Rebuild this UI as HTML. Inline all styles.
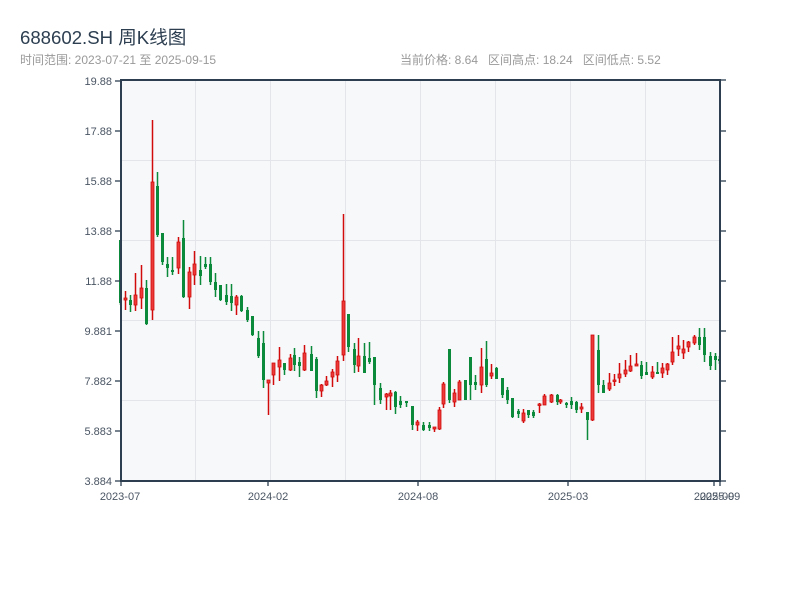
<!DOCTYPE html>
<html><head><meta charset="utf-8"><style>
html,body{margin:0;padding:0;background:#fff;width:800px;height:600px;overflow:hidden}
.t{position:absolute;left:20px;top:23px;font:18.6px "Liberation Sans","Noto Sans CJK SC",sans-serif;color:#2c3e50}
.s{position:absolute;top:51px;font:12px "Liberation Sans","Noto Sans CJK SC",sans-serif;color:#999}
svg{position:absolute;left:0;top:0}
</style></head><body>
<div class="t">688602.SH 周K线图</div>
<div class="s" style="left:20px">时间范围: 2023-07-21 至 2025-09-15</div>
<div class="s" style="left:400px">当前价格: 8.64&nbsp;&nbsp; 区间高点: 18.24&nbsp;&nbsp; 区间低点: 5.52</div>
<svg id="c" width="800" height="600" xmlns="http://www.w3.org/2000/svg" font-family="Liberation Sans, sans-serif" font-size="11">
<rect x="121" y="80" width="599" height="400" fill="#f7f8fa"/>
<g stroke="#e3e5ea" stroke-width="1">
<line x1="195.5" y1="80" x2="195.5" y2="480"/><line x1="270.5" y1="80" x2="270.5" y2="480"/><line x1="345.5" y1="80" x2="345.5" y2="480"/><line x1="420.5" y1="80" x2="420.5" y2="480"/><line x1="495.5" y1="80" x2="495.5" y2="480"/><line x1="570.5" y1="80" x2="570.5" y2="480"/><line x1="645.5" y1="80" x2="645.5" y2="480"/>
<line x1="121" y1="160.5" x2="720" y2="160.5"/><line x1="121" y1="240.5" x2="720" y2="240.5"/><line x1="121" y1="320.5" x2="720" y2="320.5"/><line x1="121" y1="400.5" x2="720" y2="400.5"/>
</g>
<g id="k"></g>
<g stroke="#2c3e50" stroke-width="2" fill="none">
<line x1="121" y1="80" x2="121" y2="481"/><line x1="120" y1="481" x2="721" y2="481"/>
<line x1="120" y1="80" x2="721" y2="80"/><line x1="720" y1="80" x2="720" y2="481"/>
</g>
<g stroke="#2c3e50" stroke-width="1.3">
<line x1="115" y1="81" x2="120" y2="81"/><line x1="115" y1="131" x2="120" y2="131"/><line x1="115" y1="181" x2="120" y2="181"/><line x1="115" y1="231" x2="120" y2="231"/><line x1="115" y1="281" x2="120" y2="281"/><line x1="115" y1="331" x2="120" y2="331"/><line x1="115" y1="381" x2="120" y2="381"/><line x1="115" y1="431" x2="120" y2="431"/><line x1="115" y1="481" x2="120" y2="481"/>
<line x1="721" y1="131" x2="726" y2="131"/><line x1="721" y1="181" x2="726" y2="181"/><line x1="721" y1="231" x2="726" y2="231"/><line x1="721" y1="281" x2="726" y2="281"/><line x1="721" y1="331" x2="726" y2="331"/><line x1="721" y1="381" x2="726" y2="381"/><line x1="721" y1="431" x2="726" y2="431"/><line x1="721" y1="481" x2="726" y2="481"/><line x1="721" y1="80" x2="726" y2="80"/>
<line x1="121" y1="481" x2="121" y2="486"/><line x1="268" y1="481" x2="268" y2="486"/><line x1="418" y1="481" x2="418" y2="486"/><line x1="568" y1="481" x2="568" y2="486"/><line x1="714" y1="481" x2="714" y2="486"/><line x1="720" y1="481" x2="720" y2="486"/>
</g>
<g fill="#4a5563" text-anchor="end">
<text x="112" y="85">19.88</text><text x="112" y="135">17.88</text><text x="112" y="185">15.88</text><text x="112" y="235">13.88</text><text x="112" y="285">11.88</text><text x="112" y="335">9.881</text><text x="112" y="385">7.882</text><text x="112" y="435">5.883</text><text x="112" y="485">3.884</text>
</g>
<g fill="#4a5563" text-anchor="middle">
<text x="120" y="500">2023-07</text><text x="268" y="500">2024-02</text><text x="418" y="500">2024-08</text><text x="568" y="500">2025-03</text><text x="714" y="500">2025-09</text><text x="720" y="500">2025-09</text>
</g>
</svg>
<script>
var d=[
[120,240,305,240,303,'g'],[125,291,310,298,300,'r'],[130,295,312,300,305,'g'],[135,273,311,295,305,'r'],[141,265,309,288,298,'r'],[146,280,325,288,324,'g'],[152,120,320,182,310,'r'],[157,172,237,186,235,'g'],[162,233,265,233,262,'g'],[167,257,277,264,268,'g'],[172,257,275,270,272,'g'],[178,237,274,242,268,'r'],[183,220,298,238,297,'g'],[189,267,309,272,297,'r'],[194,251,285,264,275,'r'],[200,256,285,270,276,'g'],[205,257,269,264,267,'g'],[210,257,285,264,282,'g'],[215,273,297,282,290,'g'],[220,285,301,285,300,'g'],[226,284,305,295,302,'g'],[231,284,311,296,303,'g'],[236,295,315,297,305,'r'],[241,295,312,296,311,'g'],[247,307,322,310,320,'g'],[252,316,336,316,335,'g'],[258,331,358,338,356,'g'],[263,331,388,343,380,'g'],[268,380,415,380,383,'r'],[273,363,385,363,375,'r'],[279,347,381,360,367,'r'],[284,363,375,363,370,'g'],[290,354,371,358,370,'r'],[294,348,371,355,365,'g'],[299,357,377,362,366,'g'],[304,345,371,353,370,'r'],[311,346,371,354,371,'g'],[316,357,398,359,391,'g'],[321,384,397,385,391,'r'],[326,376,386,381,385,'r'],[332,369,387,372,377,'r'],[337,356,382,361,375,'r'],[343,214,361,301,355,'r'],[348,314,352,314,347,'g'],[354,343,373,349,365,'g'],[358,338,372,356,366,'r'],[364,343,373,356,373,'g'],[369,342,364,358,362,'g'],[374,357,405,357,385,'g'],[380,383,404,388,400,'g'],[386,393,410,394,397,'r'],[390,390,410,393,396,'r'],[395,391,414,392,407,'g'],[400,396,408,401,405,'g'],[406,401,407,401,403,'g'],[412,406,430,406,425,'g'],[417,420,431,422,425,'r'],[423,422,431,425,430,'g'],[429,422,431,425,428,'g'],[434,427,432,427,429,'r'],[439,407,430,410,429,'r'],
[443,382,408,384,404,'r'],[449,349,403,349,400,'g'],[454,389,407,393,402,'r'],[459,380,400,382,400,'r'],[465,380,400,380,400,'g'],[470,357,400,357,385,'g'],[475,375,390,382,385,'g'],[481,348,393,367,385,'r'],[486,341,387,359,385,'g'],[491,364,379,373,376,'r'],[496,367,379,368,379,'g'],[502,378,398,378,395,'g'],[507,387,404,390,400,'g'],[512,398,418,398,417,'g'],[518,409,418,411,414,'g'],[523,409,423,413,421,'r'],[528,410,418,410,415,'g'],[533,410,418,412,416,'g'],[539,403,413,404,405,'r'],[544,394,405,396,405,'r'],[551,394,403,395,402,'r'],[557,394,405,395,402,'g'],[560,399,404,400,402,'r'],[566,402,408,403,405,'g'],[571,397,409,401,405,'g'],[576,401,413,402,410,'g'],[581,403,413,407,409,'r'],[587,412,440,412,420,'g'],
[592,335,421,335,420,'r'],[598,335,393,350,385,'g'],[603,380,393,385,393,'g'],[609,373,391,383,389,'r'],[614,374,386,380,381,'r'],[619,363,383,374,378,'r'],[625,360,377,370,374,'r'],[630,355,372,366,371,'r'],[636,353,365,364,366,'r'],[641,361,379,365,376,'g'],[646,362,375,372,375,'g'],[652,366,379,372,377,'r'],[657,362,374,372,374,'g'],[662,363,378,368,373,'r'],[667,363,375,364,370,'r'],[672,337,365,352,362,'r'],[678,335,356,346,349,'r'],[683,340,359,349,353,'r'],[688,341,352,342,347,'r'],[694,335,345,337,343,'r'],[699,328,350,337,345,'g'],[704,328,362,337,355,'g'],[710,352,370,356,366,'g'],[715,353,370,356,360,'g'],[719,356,364,359,361,'g']];
var g=document.getElementById('k'),h='';
d.forEach(function(c){var x=c[0],col=c[5]=='r'?'#d10a0a':'#0a8a3a',fill=c[5]=='r'?'#ec3a3a':'#0a8a3a';
h+='<line x1="'+(x+0.5)+'" y1="'+c[1]+'" x2="'+(x+0.5)+'" y2="'+c[2]+'" stroke="'+col+'" stroke-width="1.5"/>';
var t=c[3],b=Math.max(c[4],c[3]+1.5);
h+='<rect x="'+(x-1)+'" y="'+t+'" width="3" height="'+(b-t)+'" fill="'+fill+'" stroke="'+col+'" stroke-width="'+(c[5]=='r'?0.8:0)+'"/>';});
g.innerHTML=h;
</script>
</body></html>
